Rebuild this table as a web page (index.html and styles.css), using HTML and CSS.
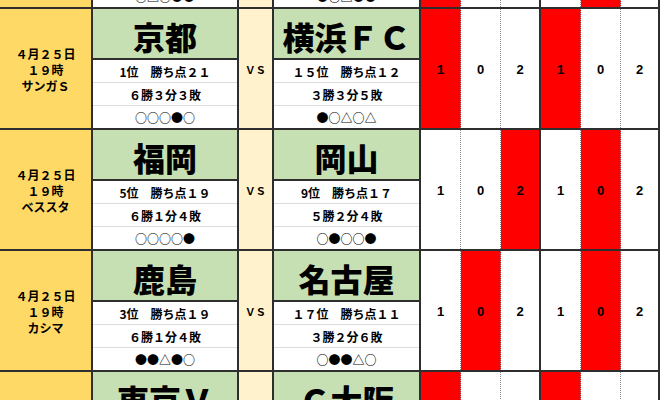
FILE: index.html
```html
<!DOCTYPE html>
<html lang="ja">
<head>
<meta charset="utf-8">
<link rel="stylesheet" href="styles.css">
</head>
<body>
<div class="sheet">

  <div class="block prev">
    <div class="date"><span>４月２５日</span><span>１９時</span><span>ノエスタ</span></div>
    <div class="team">
      <div class="name">神戸</div>
      <div class="stat">２位　勝ち点２０</div>
      <div class="stat">６勝２分３敗</div>
      <div class="stat last">○△○●●</div>
    </div>
    <div class="vs">ＶＳ</div>
    <div class="team">
      <div class="name">湘南</div>
      <div class="stat">１２位　勝ち点１３</div>
      <div class="stat">３勝４分４敗</div>
      <div class="stat last">●○△●●</div>
    </div>
    <div class="score red">1</div><div class="score">0</div><div class="score mid">2</div>
    <div class="score">1</div><div class="score red">0</div><div class="score end">2</div>
  </div>

  <div class="block">
    <div class="date"><span>４月２５日</span><span>１９時</span><span>サンガＳ</span></div>
    <div class="team">
      <div class="name">京都</div>
      <div class="stat">1位　勝ち点２１</div>
      <div class="stat">６勝３分３敗</div>
      <div class="stat last">○○○●○</div>
    </div>
    <div class="vs">ＶＳ</div>
    <div class="team">
      <div class="name">横浜ＦＣ</div>
      <div class="stat">１５位　勝ち点１２</div>
      <div class="stat">３勝３分５敗</div>
      <div class="stat last">●○△○△</div>
    </div>
    <div class="score red">1</div><div class="score">0</div><div class="score mid">2</div>
    <div class="score red">1</div><div class="score">0</div><div class="score end">2</div>
  </div>

  <div class="block">
    <div class="date"><span>４月２５日</span><span>１９時</span><span>ベススタ</span></div>
    <div class="team">
      <div class="name">福岡</div>
      <div class="stat">5位　勝ち点１９</div>
      <div class="stat">６勝１分４敗</div>
      <div class="stat last">○○○○●</div>
    </div>
    <div class="vs">ＶＳ</div>
    <div class="team">
      <div class="name">岡山</div>
      <div class="stat">9位　勝ち点１７</div>
      <div class="stat">５勝２分４敗</div>
      <div class="stat last">○●○○●</div>
    </div>
    <div class="score">1</div><div class="score">0</div><div class="score mid red">2</div>
    <div class="score">1</div><div class="score red">0</div><div class="score end">2</div>
  </div>

  <div class="block">
    <div class="date"><span>４月２５日</span><span>１９時</span><span>カシマ</span></div>
    <div class="team">
      <div class="name">鹿島</div>
      <div class="stat">3位　勝ち点１９</div>
      <div class="stat">６勝１分４敗</div>
      <div class="stat last">●●△●○</div>
    </div>
    <div class="vs">ＶＳ</div>
    <div class="team">
      <div class="name">名古屋</div>
      <div class="stat">１７位　勝ち点１１</div>
      <div class="stat">３勝２分６敗</div>
      <div class="stat last">○●●△○</div>
    </div>
    <div class="score">1</div><div class="score red">0</div><div class="score mid">2</div>
    <div class="score">1</div><div class="score red">0</div><div class="score end">2</div>
  </div>

  <div class="block">
    <div class="date"><span>４月２５日</span><span>１９時</span><span>味スタ</span></div>
    <div class="team">
      <div class="name">東京Ｖ</div>
      <div class="stat">８位　勝ち点１７</div>
      <div class="stat">４勝５分２敗</div>
      <div class="stat last">○△△●○</div>
    </div>
    <div class="vs">ＶＳ</div>
    <div class="team">
      <div class="name">Ｃ大阪</div>
      <div class="stat">１０位　勝ち点１６</div>
      <div class="stat">４勝４分３敗</div>
      <div class="stat last">●○△○●</div>
    </div>
    <div class="score red">1</div><div class="score">0</div><div class="score mid">2</div>
    <div class="score red">1</div><div class="score">0</div><div class="score end">2</div>
  </div>

</div>
</body>
</html>
```

FILE: styles.css
```css
html, body {
  margin: 0;
  padding: 0;
  background: #ffffff;
}

body {
  width: 660px;
  height: 400px;
  overflow: hidden;
  font-family: "Noto Sans CJK JP", "Liberation Sans", sans-serif;
  font-weight: 700;
  color: #000;
}

.sheet {
  display: flex;
  flex-direction: column;
}

.block {
  display: grid;
  grid-template-columns: 93px 146px 35px 147px 40px 40px 40px 40px 40px 39px;
  height: 121px;
  box-sizing: border-box;
  border-bottom: 2px solid #2e2e2e;
  flex: none;
}

.block.prev {
  margin-top: -112px;
}

.date {
  background: #ffd966;
  border-right: 2px solid #2e2e2e;
  display: flex;
  flex-direction: column;
  align-items: center;
  justify-content: center;
  font-size: 12px;
  line-height: 16px;
  padding-top: 2px;
}

.team {
  display: flex;
  flex-direction: column;
  border-right: 2px solid #2e2e2e;
}

.name {
  flex: none;
  background: #c6e0b4;
  border-bottom: 2px solid #2e2e2e;
  display: flex;
  align-items: center;
  justify-content: center;
  font-size: 32px;
  font-weight: 900;
  line-height: 1;
  padding-top: 4px;
  box-sizing: border-box;
  height: 51px;
  white-space: nowrap;
}

.stat {
  height: 23px;
  flex: none;
  box-sizing: border-box;
  border-bottom: 1px solid #dcdcdc;
  display: flex;
  align-items: center;
  justify-content: center;
  font-size: 12px;
  white-space: nowrap;
}

.stat.last {
  border-bottom: none;
  height: 22px;
}

.vs {
  background: #fff2cc;
  border-right: 2px solid #2e2e2e;
  display: flex;
  align-items: center;
  justify-content: center;
  font-size: 10.5px;
  padding-top: 2px;
}

.score {
  display: flex;
  align-items: center;
  justify-content: center;
  font-family: "Liberation Sans", Arial, sans-serif;
  font-size: 13px;
  border-right: 1px dotted #8a8a8a;
  padding-top: 2px;
}

.score.mid {
  border-right: 2px solid #2e2e2e;
}

.score.end {
  border-right: 2px solid #2e2e2e;
}

.score.red {
  background: #ff0000;
}
```
